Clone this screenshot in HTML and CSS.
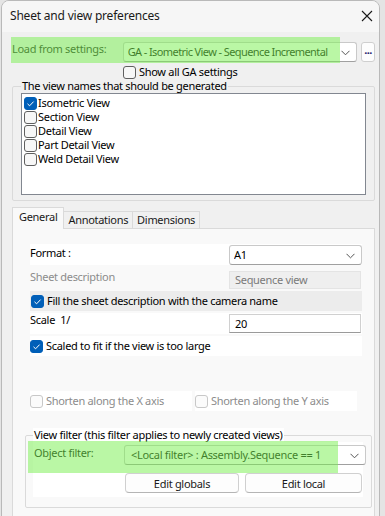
FILE: index.html
```html
<!DOCTYPE html>
<html lang="en">
<head>
  <meta charset="UTF-8" />
  <title>Sheet and view preferences</title>
  <link rel="stylesheet" href="styles.css">
</head>
<body>
  <div class="dialog">
    <div class="titlebar">
      <span class="title">Sheet and view preferences</span>
      <svg class="close" width="12" height="12" viewBox="0 0 12 12">
        <path d="M1 1L11 11M11 1L1 11" stroke="#1a1a1a" stroke-width="1.1" fill="none"/>
      </svg>
    </div>

    <div class="content">
      <div class="load-row">
        <span class="highlight hl-load"></span>
        <span class="load-label">Load from settings:</span>
        <div class="combo combo-load">
          <span class="combo-text">GA - Isometric View - Sequence Incremental</span>
          <svg class="chevron" width="9" height="6" viewBox="0 0 9 6"><path d="M0.5 0.8L4.5 4.8L8.5 0.8" stroke="#555" fill="none"/></svg>
        </div>
        <button class="more">...</button>
      </div>

      <div class="check show-all"><span class="box"></span>Show all GA settings</div>

      <fieldset class="group views">
        <legend>The view names that should be generated</legend>
        <div class="listbox">
          <div class="item"><span class="box checked"><svg viewBox="0 0 13 13"><path d="M3.5 6.8L5.6 8.8L9.6 4.6" stroke="#fff" stroke-width="1" fill="none"/></svg></span>Isometric View</div>
          <div class="item"><span class="box"></span>Section View</div>
          <div class="item"><span class="box"></span>Detail View</div>
          <div class="item"><span class="box"></span>Part Detail View</div>
          <div class="item"><span class="box"></span>Weld Detail View</div>
        </div>
      </fieldset>

      <div class="tabs">
        <div class="tab active">General</div>
        <div class="tab">Annotations</div>
        <div class="tab">Dimensions</div>
      </div>

      <div class="panel">
        <div class="row white row-format">
          <span class="row-label">Format :</span>
          <div class="combo combo-small">
            <span class="combo-text">A1</span>
            <svg class="chevron" width="9" height="6" viewBox="0 0 9 6"><path d="M0.5 0.8L4.5 4.8L8.5 0.8" stroke="#555" fill="none"/></svg>
          </div>
        </div>

        <div class="row row-desc">
          <span class="row-label muted">Sheet description</span>
          <div class="textbox disabled">Sequence view</div>
        </div>

        <div class="row grey row-fill">
          <span class="box checked"><svg viewBox="0 0 13 13"><path d="M3.5 6.8L5.6 8.8L9.6 4.6" stroke="#fff" stroke-width="1" fill="none"/></svg></span>
          <span class="check-text">Fill the sheet description with the camera name</span>
        </div>

        <div class="row white row-scale">
          <span class="row-label">Scale&nbsp;&nbsp;1/</span>
          <div class="textbox">20</div>
        </div>

        <div class="row white row-fit">
          <span class="box checked"><svg viewBox="0 0 13 13"><path d="M3.5 6.8L5.6 8.8L9.6 4.6" stroke="#fff" stroke-width="1" fill="none"/></svg></span>
          <span class="check-text">Scaled to fit if the view is too large</span>
        </div>

        <div class="shorten">
          <div class="shorten-item"><span class="box disabled"></span><span class="muted">Shorten along the X axis</span></div>
          <div class="shorten-item"><span class="box disabled"></span><span class="muted">Shorten along the Y axis</span></div>
        </div>

        <fieldset class="group filter">
          <legend>View filter (this filter applies to newly created views)</legend>
          <div class="filter-body">
            <span class="highlight hl-filter"></span>
            <div class="filter-row">
              <span class="filter-label">Object filter:</span>
              <div class="combo combo-filter">
                <span class="combo-text">&lt;Local filter&gt; : Assembly.Sequence == 1</span>
                <svg class="chevron" width="9" height="6" viewBox="0 0 9 6"><path d="M0.5 0.8L4.5 4.8L8.5 0.8" stroke="#555" fill="none"/></svg>
              </div>
            </div>
            <div class="buttons">
              <button class="btn btn-globals">Edit globals</button>
              <button class="btn btn-local">Edit local</button>
            </div>
          </div>
        </fieldset>
      </div>
    </div>
  </div>
</body>
</html>
```

FILE: styles.css
```css
* {
  margin: 0;
  padding: 0;
  box-sizing: border-box;
}

html, body {
  height: 100%;
  overflow: hidden;
}

body {
  background-color: #e4e4e4;
  font-family: "Noto Sans", "Open Sans", sans-serif;
  font-size: 11px;
  line-height: 14px;
  letter-spacing: -0.3px;
  color: #000;
}

.dialog {
  margin-left: 1px;
  width: 379px;
  height: 530px;
  background-color: #f0f0f0;
  border: 1px solid #b9b9b9;
  border-radius: 8px 8px 0 0;
  overflow: hidden;
}

.titlebar {
  height: 31px;
  background-color: #f6f6f6;
  display: flex;
  align-items: center;
  justify-content: space-between;
  padding: 0 6px 0 8px;
}

.title {
  font-size: 12px;
  letter-spacing: -0.2px;
  color: #1a1a1a;
  margin-top: -2px;
}

.close {
  margin-top: -1px;
}

.content {
  padding: 0 4px 0 9px;
}

/* load from settings */
.load-row {
  position: relative;
  display: flex;
  align-items: flex-start;
  height: 26px;
  margin-top: 5px;
}

.highlight {
  position: absolute;
  background-color: rgba(122, 240, 82, 0.52);
  pointer-events: none;
  z-index: 2;
}

.hl-load {
  left: 0;
  top: 0;
  width: 329px;
  height: 26px;
}

.load-label {
  width: 112px;
  padding: 5px 0 0 1px;
  color: #1a1a1a;
}

.combo {
  position: relative;
  height: 20px;
  background-color: #fff;
  border: 1px solid #c9c9c9;
  border-bottom-color: #a0a0a0;
  border-radius: 3px;
  display: flex;
  align-items: center;
  padding-left: 4px;
  white-space: nowrap;
}

.combo-text {
  overflow: hidden;
  min-width: 0;
  margin-right: 18px;
}

.combo .chevron {
  position: absolute;
  right: 6px;
  top: 7px;
}

.combo-load {
  margin-top: 5px;
  width: 235px;
}

.combo-load .combo-text {
  letter-spacing: -0.6px;
}

.more {
  margin: 5px 0 0 4px;
  width: 14px;
  height: 20px;
  border: 1px solid #cfcfcf;
  border-radius: 3px;
  background-color: #fdfdfd;
  font-family: inherit;
  font-size: 11px;
  letter-spacing: -0.5px;
  line-height: 10px;
  color: #1a1a6e;
  font-weight: bold;
  padding-bottom: 4px;
}

/* checkboxes */
.box {
  position: relative;
  display: inline-block;
  width: 13px;
  height: 13px;
  border: 1px solid #5f5f5f;
  border-radius: 3px;
  background-color: #f7f7f7;
  flex: none;
}

.box.checked {
  background-color: #005fb8;
  border-color: #005fb8;
}

.box.checked svg {
  position: absolute;
  left: -1px;
  top: -1px;
  width: 13px;
  height: 13px;
}

.box.disabled {
  border-color: #c8c8c8;
  background-color: #fbfbfb;
}

.check {
  display: flex;
  align-items: center;
  gap: 3px;
}

.show-all {
  margin: 2px 0 0 112px;
  height: 14px;
}

/* group boxes */
.group {
  border: 1px solid #dadada;
  border-radius: 2px;
}

.group legend {
  line-height: 14px;
  padding: 0 1px;
}

.views {
  margin-left: 1px;
  padding: 0 8px 5px 8px;
}

.listbox {
  height: 102px;
  background-color: #fff;
  border: 1px solid #828790;
  padding: 2px 2px;
}

.item {
  display: flex;
  align-items: center;
  height: 14px;
  gap: 1px;
}

/* tabs */
.tabs {
  display: flex;
  align-items: flex-end;
  margin-top: 6px;
  padding-left: 1px;
  height: 21px;
  position: relative;
  z-index: 1;
}

.tab {
  height: 17px;
  padding: 0 4px;
  border: 1px solid #dadada;
  border-bottom: none;
  background-color: #f0f0f0;
  line-height: 16px;
  color: #1a1a1a;
}

.tab.active {
  height: 22px;
  margin-bottom: -1px;
  padding: 0 6px;
  background-color: #f9f9f9;
  line-height: 18px;
}

.tab + .tab {
  border-left: none;
}

.panel {
  margin-left: 1px;
  height: 320px;
  background-color: #f9f9f9;
  border: 1px solid #dadada;
  padding: 15px 12px 0 17px;
}

.row {
  display: flex;
  align-items: flex-start;
  height: 21px;
}

.row.white {
  background-color: #fff;
}

.row.grey {
  background-color: #ececec;
  align-items: center;
}

.row-label {
  width: 199px;
  padding-top: 2px;
}

.muted {
  color: #8c8c8c;
}

.row-format .combo {
  width: 133px;
  margin-top: 1px;
}

.row-desc {
  margin-top: 3px;
  height: 22px;
}

.row-desc .row-label {
  padding-top: 2px;
}

.textbox {
  width: 132px;
  height: 19px;
  margin-top: 1px;
  background-color: #fff;
  border: 1px solid #d0d0d0;
  border-bottom-color: #9a9a9a;
  padding: 2px 0 0 5px;
}

.textbox.disabled {
  margin-top: 3px;
  height: 18px;
  background-color: #efefef;
  border: 1px solid #e4e4e4;
  color: #7a7a7a;
  padding-top: 1px;
}

.row-fill {
  height: 20px;
  margin-top: 1px;
  padding-left: 1px;
}

.check-text {
  margin-left: 3px;
}

.row-scale {
  margin-top: 2px;
}

.row-scale .row-label {
  padding-top: 0;
}

.row-fit {
  margin-top: 2px;
  height: 20px;
  align-items: center;
}

.shorten {
  display: flex;
  gap: 3px;
  margin-top: 35px;
  height: 20px;
}

.shorten-item {
  width: 162px;
  display: flex;
  align-items: center;
  gap: 3px;
  background-color: #fff;
}

/* view filter */
.filter {
  margin: 17px -10px 0 -5px;
  padding: 0 8px 10px 7px;
}

.filter legend {
  background-color: #fff;
}

.filter-body {
  position: relative;
  background-color: #fff;
  height: 55px;
  padding-top: 3px;
}

.hl-filter {
  left: -5px;
  top: -1px;
  width: 310px;
  height: 32px;
}

.filter-row {
  display: flex;
  align-items: flex-start;
}

.filter-label {
  width: 91px;
  padding: 1px 0 0 1px;
}

.combo-filter {
  width: 242px;
  margin-right: -3px;
  padding-left: 6px;
}

.buttons {
  display: flex;
  gap: 6px;
  margin: 8px 0 0 92px;
}

.btn {
  height: 20px;
  border: 1px solid #d0d0d0;
  border-bottom-color: #b5b5b5;
  border-radius: 4px;
  background-color: #fdfdfd;
  font-family: inherit;
  font-size: 11px;
  letter-spacing: inherit;
  color: #1a1a1a;
}

.btn-globals {
  width: 114px;
}

.btn-local {
  width: 117px;
}
```
